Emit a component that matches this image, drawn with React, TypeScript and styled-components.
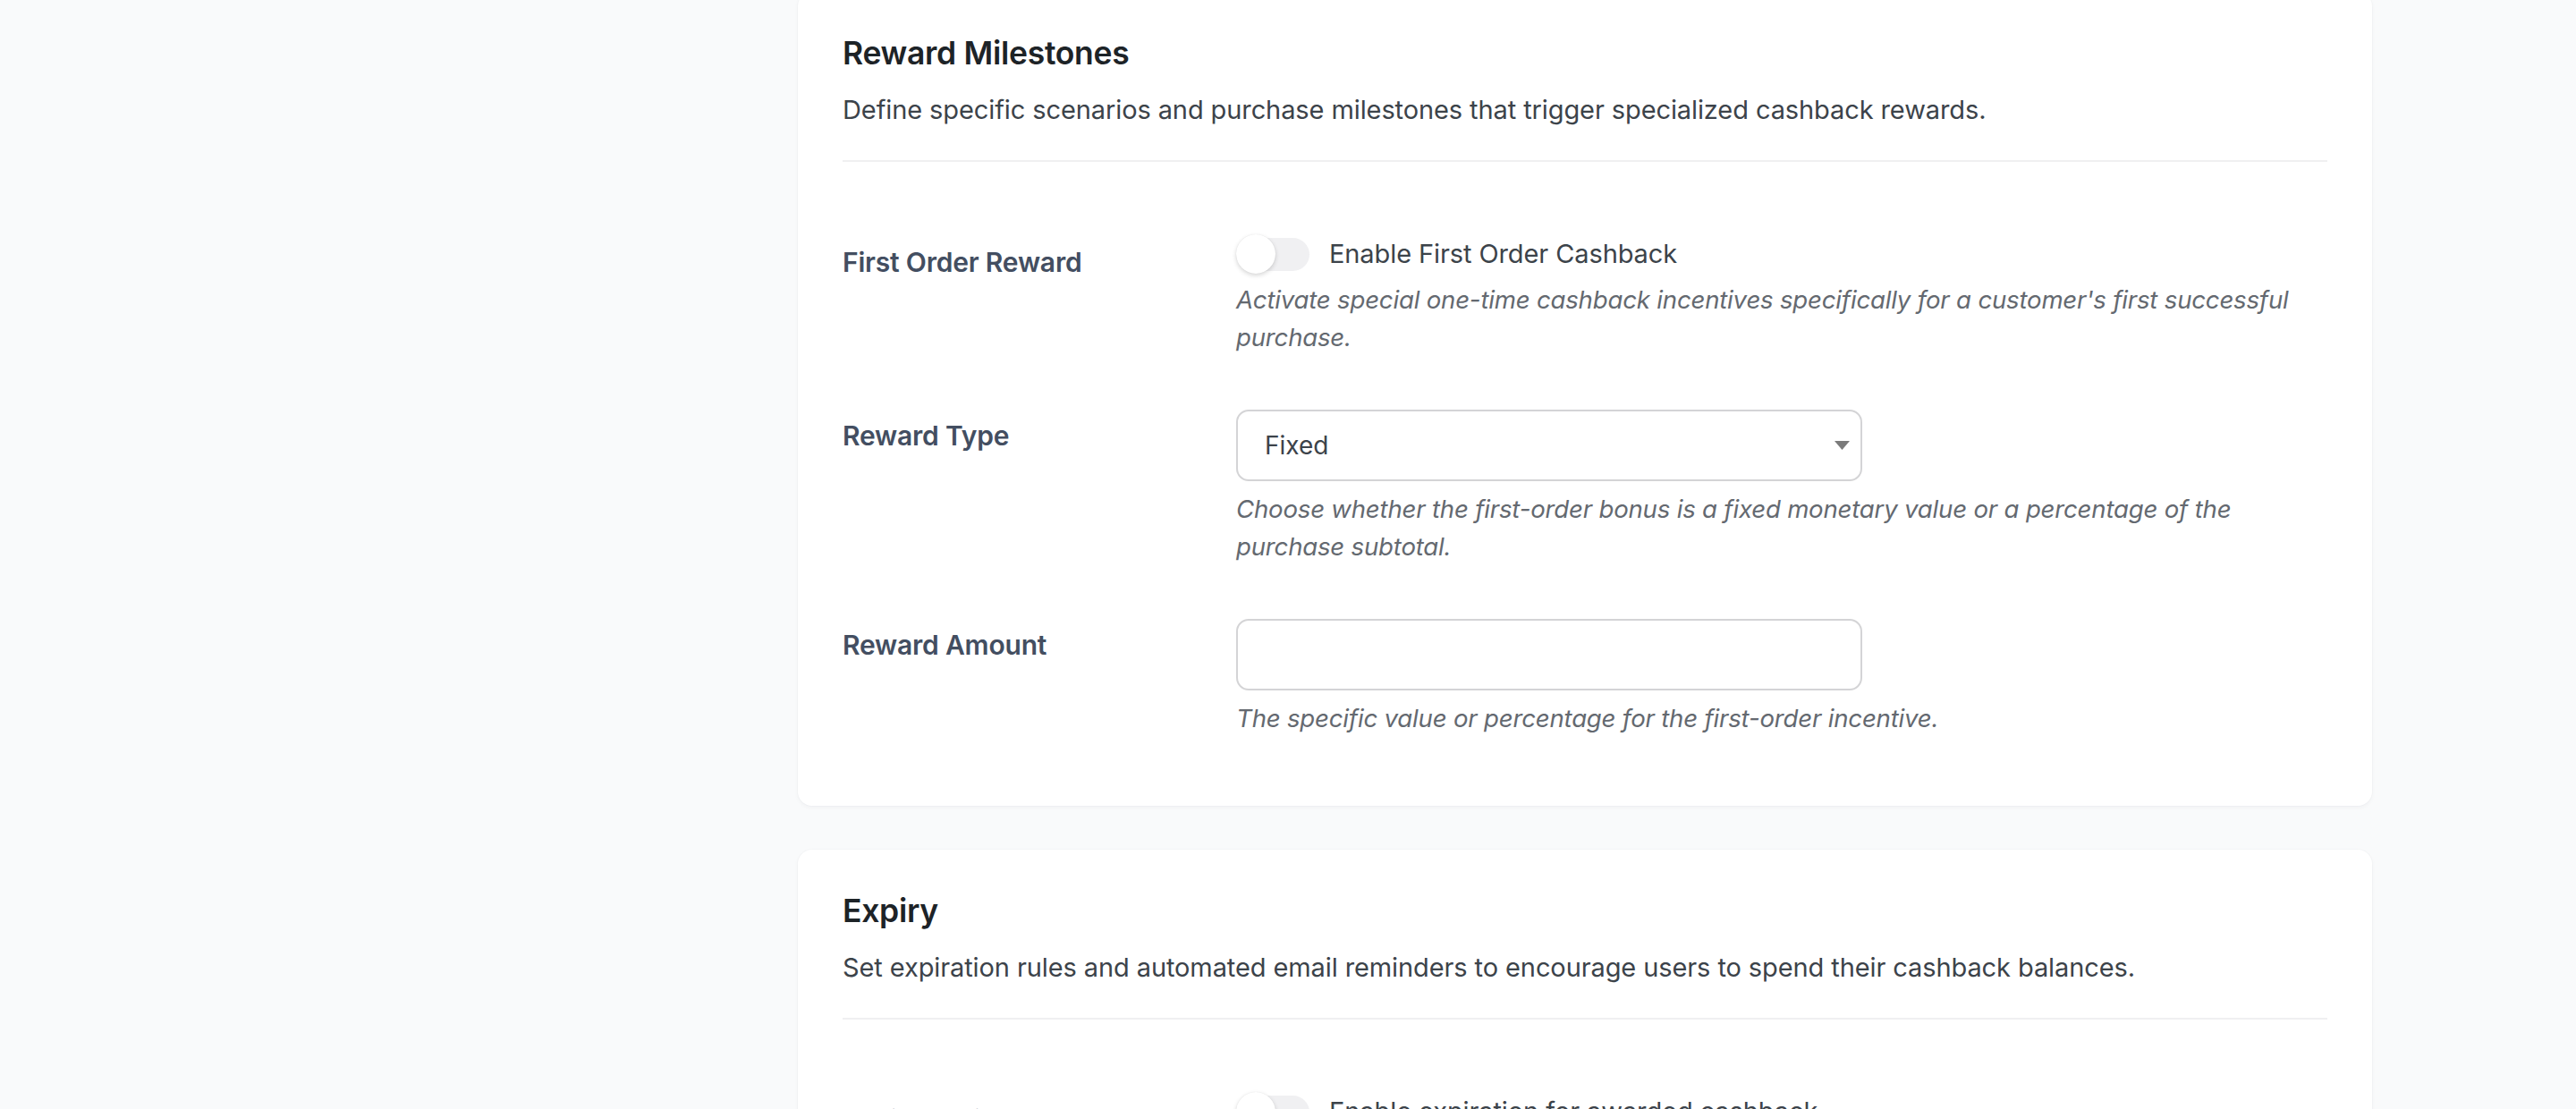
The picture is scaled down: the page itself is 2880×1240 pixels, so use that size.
import React from "react";
import styled, { createGlobalStyle } from "styled-components";

const GlobalStyle = createGlobalStyle`
  html, body {
    margin: 0;
    padding: 0;
    background: #f9fafb;
    font-family: Inter, "Noto Sans", "Liberation Sans", sans-serif;
    -webkit-font-smoothing: antialiased;
  }
  * { box-sizing: border-box; }
`;

const Page = styled.div`
  display: grid;
  grid-template-columns: 892px 1760px;
  height: 1240px;
  overflow: hidden;
`;

const Sidebar = styled.div``;

const Stack = styled.div`
  display: flex;
  flex-direction: column;
  gap: 49px;
  margin-top: -9px;
`;

const Card = styled.section`
  background: #ffffff;
  border-radius: 16px;
  box-shadow: 0 2px 5px rgba(15, 23, 42, 0.04), 0 0 0 1px rgba(15, 23, 42, 0.015);
  padding: 45px 50px 47px;
`;

const Title = styled.h2`
  margin: 0;
  font-size: 35.5px;
  line-height: 47px;
  font-weight: 600;
  color: #1d2327;
  letter-spacing: -0.3px;
`;

const Lead = styled.p`
  margin: 19px 0 0;
  font-size: 29px;
  line-height: 42px;
  color: #3c434a;
  letter-spacing: -0.1px;
`;

const Divider = styled.hr`
  margin: 35px 0 0;
  border: 0;
  height: 2px;
  background: #f0f0f1;
`;

const Rows = styled.div`
  margin-top: 53px;
  display: flex;
  flex-direction: column;
`;

const Row = styled.div`
  display: grid;
  grid-template-columns: 420px 1fr;
`;

const Label = styled.div`
  padding: 40px 20px 40px 0;
  font-size: 30px;
  line-height: 38px;
  font-weight: 600;
  color: #434e61;
  letter-spacing: -0.2px;
`;

const Field = styled.div`
  padding: 30px 20px;
`;

const ToggleRow = styled.label`
  display: flex;
  align-items: center;
  gap: 22px;
  height: 40px;
  font-size: 29px;
  line-height: 40px;
  color: #3c434a;
  letter-spacing: -0.1px;
`;

const Track = styled.span`
  position: relative;
  display: inline-block;
  width: 82px;
  height: 37px;
  border-radius: 19px;
  background: #f0f0f2;
  flex: none;
`;

const Knob = styled.span`
  position: absolute;
  left: 0;
  top: 50%;
  width: 44px;
  height: 44px;
  margin-top: -22px;
  border-radius: 50%;
  background: #ffffff;
  box-shadow: 0 2px 5px rgba(0, 0, 0, 0.16), 0 0 1px rgba(0, 0, 0, 0.1);
`;

const Help = styled.p`
  margin: 10px 0 0;
  font-size: 27.6px;
  line-height: 42px;
  font-style: italic;
  color: #646970;
  letter-spacing: -0.2px;
`;

const SelectBox = styled.div`
  display: flex;
  align-items: center;
  width: 700px;
  height: 80px;
  border: 2px solid #d4d4d6;
  border-radius: 14px;
  background: #fff;
  padding: 0 12px 0 30px;
`;

const NativeSelect = styled.select`
  flex: 1;
  appearance: none;
  -webkit-appearance: none;
  border: 0;
  background: transparent;
  font-family: inherit;
  font-size: 28px;
  color: #3c434a;
  outline: none;
  padding: 0;
`;

const TextInput = styled.input`
  display: block;
  width: 700px;
  height: 80px;
  border: 2px solid #d4d4d6;
  border-radius: 14px;
  background: #fff;
  padding: 0 30px;
  font-family: inherit;
  font-size: 28px;
  color: #3c434a;
  outline: none;
`;

function Toggle({ label }: { label: string }) {
  return (
    <ToggleRow>
      <Track>
        <Knob />
      </Track>
      <span>{label}</span>
    </ToggleRow>
  );
}

function Caret() {
  return (
    <svg width="17" height="10" viewBox="0 0 17 10" aria-hidden="true">
      <path d="M0 0 H17 L8.5 10 Z" fill="#7b7b7b" />
    </svg>
  );
}

export default function App() {
  return (
    <>
      <GlobalStyle />
      <Page>
        <Sidebar />
        <Stack>
          <Card>
            <Title>Reward Milestones</Title>
            <Lead>
              Define specific scenarios and purchase milestones that trigger specialized cashback rewards.
            </Lead>
            <Divider />
            <Rows>
              <Row>
                <Label>First Order Reward</Label>
                <Field>
                  <Toggle label="Enable First Order Cashback" />
                  <Help>
                    Activate special one-time cashback incentives specifically for a customer's first successful
                    purchase.
                  </Help>
                </Field>
              </Row>
              <Row>
                <Label>Reward Type</Label>
                <Field>
                  <SelectBox>
                    <NativeSelect defaultValue="fixed">
                      <option value="fixed">Fixed</option>
                      <option value="percentage">Percentage</option>
                    </NativeSelect>
                    <Caret />
                  </SelectBox>
                  <Help>
                    Choose whether the first-order bonus is a fixed monetary value or a percentage of the
                    purchase subtotal.
                  </Help>
                </Field>
              </Row>
              <Row>
                <Label>Reward Amount</Label>
                <Field>
                  <TextInput type="text" />
                  <Help>The specific value or percentage for the first-order incentive.</Help>
                </Field>
              </Row>
            </Rows>
          </Card>
          <Card>
            <Title>Expiry</Title>
            <Lead>
              Set expiration rules and automated email reminders to encourage users to spend their cashback balances.
            </Lead>
            <Divider />
            <Rows>
              <Row>
                <Label>Expiry Period</Label>
                <Field>
                  <Toggle label="Enable expiration for awarded cashback" />
                  <Help>Automatically expire cashback that has not been used within the set period.</Help>
                </Field>
              </Row>
            </Rows>
          </Card>
        </Stack>
      </Page>
    </>
  );
}
